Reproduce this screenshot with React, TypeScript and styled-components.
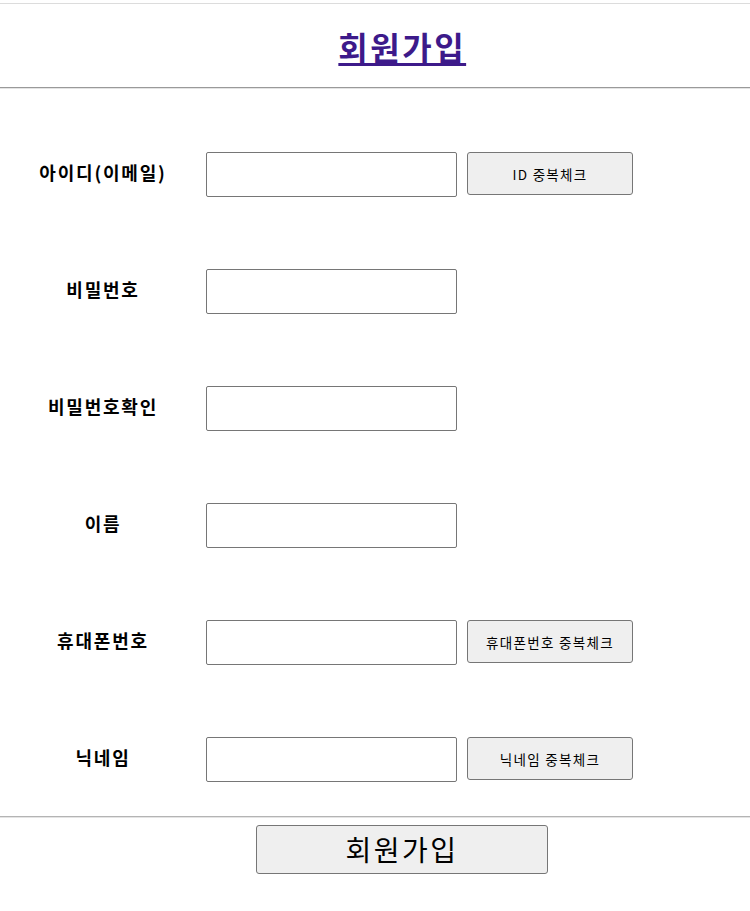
import React from "react";
import styled, { createGlobalStyle } from "styled-components";

const Global = createGlobalStyle`
  html, body { margin: 0; padding: 0; background: #fff; }
  body { font-family: "Noto Sans CJK KR", "Noto Sans", sans-serif; color: #000; }
`;

const Page = styled.div`
  width: 750px;
`;

const TopRule = styled.div`
  margin-top: 3px;
  height: 1px;
  background: #dcdcdc;
`;

const Header = styled.header`
  height: 83px;
  display: flex;
  align-items: center;
  justify-content: center;
  padding-left: 52px;
  box-sizing: border-box;
`;

const TitleLink = styled.a`
  font-size: 32px;
  font-weight: 700;
  color: #3d1a8a;
  text-decoration: underline;
  text-underline-offset: 3px;
  letter-spacing: 2.5px;
  margin-right: -2.5px;
`;

const Rule = styled.hr<{ $tone?: string }>`
  margin: 0;
  border: none;
  height: 2px;
  background: linear-gradient(${(p) => p.$tone || "#9a9a9a"} 50%, #e4e4e4 50%);
`;

const Form = styled.form`
  padding: 63px 0 34px;
  display: grid;
  row-gap: 72px;
`;

const Row = styled.div`
  height: 45px;
  display: grid;
  grid-template-columns: 206px auto auto;
  align-items: center;
  justify-content: start;
`;

const Label = styled.label`
  text-align: center;
  font-size: 18px;
  font-weight: 700;
  padding-bottom: 6px;
  letter-spacing: 1.8px;
`;

const Input = styled.input`
  width: 251px;
  height: 45px;
  box-sizing: border-box;
  border: 1px solid #767676;
  border-radius: 2px;
  padding: 0 4px;
  font-size: 16px;
  background: #fff;
`;

const CheckButton = styled.button`
  margin-left: 10px;
  width: 166px;
  height: 43px;
  align-self: start;
  box-sizing: border-box;
  background: #efefef;
  border: 1px solid #767676;
  border-radius: 3px;
  font-family: "Noto Sans CJK KR", sans-serif;
  font-size: 13.5px;
  letter-spacing: 1.3px;
  color: #000;
  padding: 0;
`;

const Footer = styled.div`
  display: flex;
  justify-content: center;
  padding-left: 54px;
  padding-top: 7px;
`;

const SubmitButton = styled.button`
  width: 292px;
  height: 49px;
  box-sizing: border-box;
  background: #efefef;
  border: 1px solid #767676;
  border-radius: 3px;
  font-family: "Noto Sans CJK KR", sans-serif;
  font-size: 28px;
  letter-spacing: 2.5px;
  color: #000;
  padding: 0 0 2px;
`;

const fields: { label: string; check?: string }[] = [
  { label: "아이디(이메일)", check: "ID 중복체크" },
  { label: "비밀번호" },
  { label: "비밀번호확인" },
  { label: "이름" },
  { label: "휴대폰번호", check: "휴대폰번호 중복체크" },
  { label: "닉네임", check: "닉네임 중복체크" },
];

export default function App() {
  return (
    <Page>
      <Global />
      <TopRule />
      <Header>
        <TitleLink href="#">회원가입</TitleLink>
      </Header>
      <Rule />
      <Form onSubmit={(e) => e.preventDefault()}>
        {fields.map((f) => (
          <Row key={f.label}>
            <Label>{f.label}</Label>
            <Input type={f.label.startsWith("비밀번호") ? "password" : "text"} />
            {f.check ? <CheckButton type="button">{f.check}</CheckButton> : <span />}
          </Row>
        ))}
      </Form>
      <Rule $tone="#b4b4b4" />
      <Footer>
        <SubmitButton type="submit">회원가입</SubmitButton>
      </Footer>
    </Page>
  );
}
